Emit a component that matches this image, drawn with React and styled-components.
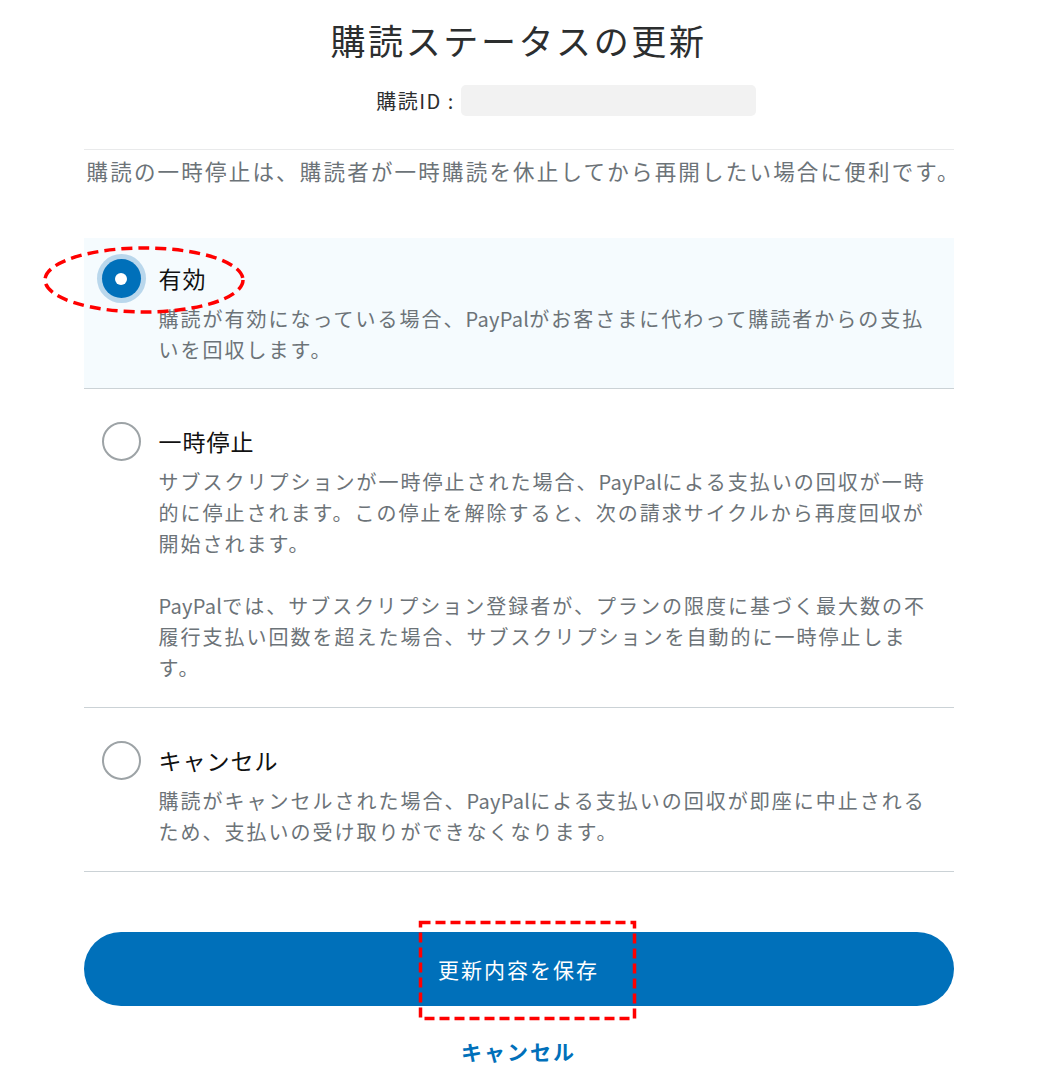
import React, { useState } from 'react'
import styled, { createGlobalStyle } from 'styled-components'

const GlobalStyle = createGlobalStyle`
body {
  margin: 0;
  background: #fff;
  font-family: "Noto Sans CJK JP", "Noto Sans", sans-serif;
  color: #2c2e2f;
}
`;

const Page = styled.div`
width: 870px;
margin: 0 auto;
padding-top: 18px;
`;

const Title = styled.h1`
margin: 0;
text-align: center;
font-size: 35px;
line-height: 44px;
font-weight: 400;
letter-spacing: 2.6px;
color: #2c2e2f;
`;

const IdRow = styled.div`
display: flex;
justify-content: center;
align-items: center;
gap: 6px;
margin-top: 23px;
padding-left: 95px;
font-size: 20px;
letter-spacing: 1.5px;
color: #2c2e2f;
`;

const IdBox = styled.div`
width: 295px;
height: 31px;
border-radius: 5px;
background: #f2f2f2;
`;

const Divider = styled.hr`
margin: 33px 0 0;
border: 0;
border-top: 1px solid #e9eaeb;
`;

const Intro = styled.p`
margin: 6px 0 0 3px;
font-size: 21.5px;
line-height: 30px;
letter-spacing: 2.2px;
color: #6c7378;
white-space: nowrap;
`;

const OptionList = styled.div`
margin-top: 52px;
`;

const Option = styled.div`
position: relative;
display: flex;
align-items: flex-start;
gap: 18px;
padding: ${p => (p.$first ? '23px 24px 23px' : '35px 24px 24px')} 18px;
border-bottom: 1px solid #cbd2d6;
background: ${p => (p.$checked ? '#f5fbfe' : '#fff')};
cursor: pointer;
`;

const Radio = styled.span`
flex: none;
box-sizing: border-box;
width: 39px;
height: 39px;
margin-top: -2px;
border-radius: 50%;
display: flex;
align-items: center;
justify-content: center;
border: ${p => (p.$checked ? 'none' : '2px solid #9da3a6')};
background: ${p => (p.$checked ? '#0070ba' : '#fff')};
box-shadow: ${p => (p.$checked ? '0 0 0 5px #b9d7ec' : 'none')};

&::after {
  content: '';
  display: ${p => (p.$checked ? 'block' : 'none')};
  width: 12px;
  height: 12px;
  border-radius: 50%;
  background: #fff;
}
`;

const Body = styled.div`
flex: 1;
`;

const Label = styled.div`
font-size: 23px;
line-height: 34px;
letter-spacing: 1px;
color: #111;
`;

const Desc = styled.p`
margin: 8px 0 0;
font-size: 20px;
line-height: 31px;
letter-spacing: 2px;
color: #6c7378;
white-space: nowrap;

& + & {
  margin-top: 31px;
}
`;

const Latin = styled.span`
letter-spacing: 0.3px;
`;

const SaveButton = styled.button`
position: relative;
display: block;
width: 100%;
height: 74px;
margin-top: 60px;
border: 0;
border-radius: 37px;
background: #0070ba;
color: #fff;
font-family: inherit;
font-size: 21px;
letter-spacing: 2px;
cursor: pointer;
`;

const CancelLink = styled.a`
display: block;
margin-top: 30px;
text-align: center;
font-size: 21px;
line-height: 30px;
font-weight: 700;
letter-spacing: 2px;
color: #0070ba;
text-decoration: none;
`;

const Mark = styled.svg`
position: absolute;
left: ${p => p.$left}px;
top: ${p => p.$top}px;
overflow: visible;
pointer-events: none;
`;

const options = [
  {
    id: 'active',
    label: '有効',
    paragraphs: [
      ['購読が有効になっている場合、PayPalがお客さまに代わって購読者からの支払', 'いを回収します。'],
    ],
  },
  {
    id: 'suspend',
    label: '一時停止',
    paragraphs: [
      [
        'サブスクリプションが一時停止された場合、PayPalによる支払いの回収が一時',
        '的に停止されます。この停止を解除すると、次の請求サイクルから再度回収が',
        '開始されます。',
      ],
      [
        'PayPalでは、サブスクリプション登録者が、プランの限度に基づく最大数の不',
        '履行支払い回数を超えた場合、サブスクリプションを自動的に一時停止しま',
        'す。',
      ],
    ],
  },
  {
    id: 'cancel',
    label: 'キャンセル',
    paragraphs: [
      ['購読がキャンセルされた場合、PayPalによる支払いの回収が即座に中止される', 'ため、支払いの受け取りができなくなります。'],
    ],
  },
];

// "PayPal" is set tighter than the Japanese around it
const renderLine = line =>
  line.split(/(PayPal)/).map((part, i) =>
    part === 'PayPal' ? <Latin key={i}>{part}</Latin> : part
  );

export default function App() {
  const [status, setStatus] = useState('active');

  return (
    <Page>
      <GlobalStyle />
      <Title>購読ステータスの更新</Title>
      <IdRow>
        <span>購読ID :</span>
        <IdBox />
      </IdRow>
      <Divider />
      <Intro>購読の一時停止は、購読者が一時購読を休止してから再開したい場合に便利です。</Intro>

      <OptionList>
        {options.map((o, i) => (
          <Option
            key={o.id}
            $first={i === 0}
            $checked={status === o.id}
            onClick={() => setStatus(o.id)}
          >
            <Radio $checked={status === o.id} />
            <Body>
              <Label>{o.label}</Label>
              {o.paragraphs.map((lines, j) => (
                <Desc key={j}>
                  {lines.map((line, k) => (
                    <React.Fragment key={k}>
                      {k > 0 && <br />}
                      {renderLine(line)}
                    </React.Fragment>
                  ))}
                </Desc>
              ))}
            </Body>
            {i === 0 && (
              <Mark $left={-40} $top={9} width="200" height="66">
                <ellipse cx="100" cy="33" rx="99" ry="32" fill="none" stroke="#f00" strokeWidth="3.5" strokeDasharray="11 6" />
              </Mark>
            )}
          </Option>
        ))}
      </OptionList>

      <SaveButton>
        更新内容を保存
        <Mark $left={335} $top={-11} width="217" height="99">
          <rect x="1.5" y="1.5" width="214" height="96" fill="none" stroke="#f00" strokeWidth="3.5" strokeDasharray="10 5" />
        </Mark>
      </SaveButton>
      <CancelLink href="#">キャンセル</CancelLink>
    </Page>
  );
}
